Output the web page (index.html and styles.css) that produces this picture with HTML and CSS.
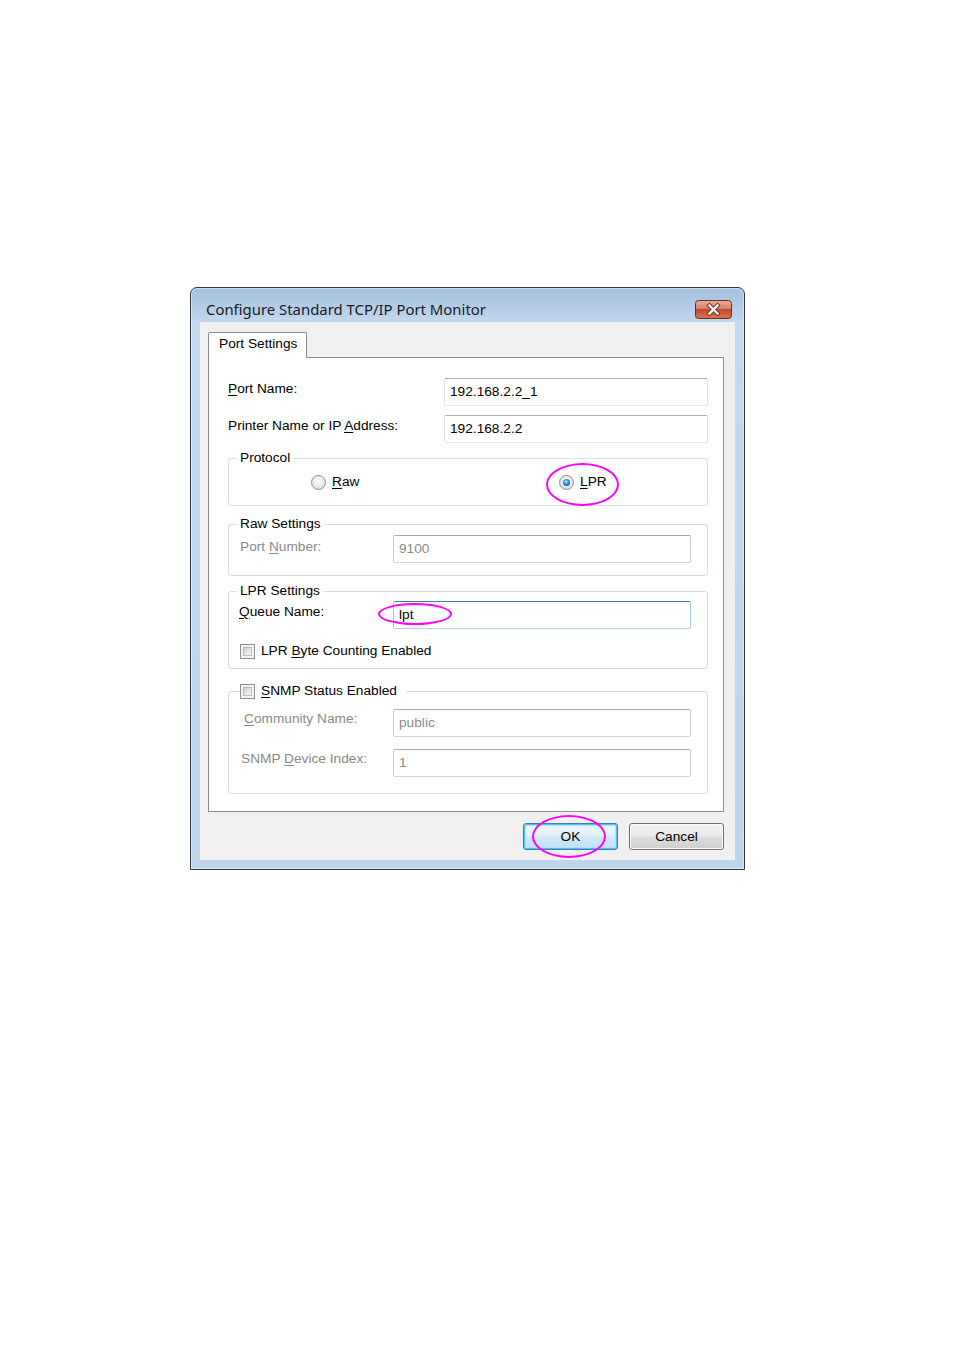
FILE: index.html
```html
<!DOCTYPE html>
<html>
<head>
<meta charset="utf-8">
<link rel="stylesheet" href="styles.css">
</head>
<body>
<div class="window">
  <div class="titlebar">
    <span class="title">Configure Standard TCP/IP Port Monitor</span>
    <span class="close">
      <svg width="37" height="19" viewBox="0 0 37 19">
        <defs>
          <linearGradient id="cr" x1="0" y1="0" x2="0" y2="1">
            <stop offset="0" stop-color="#eab0a2"/>
            <stop offset="0.45" stop-color="#d98068"/>
            <stop offset="0.5" stop-color="#c4492e"/>
            <stop offset="1" stop-color="#d8764e"/>
          </linearGradient>
        </defs>
        <rect x="0.5" y="0.5" width="36" height="18" rx="3" fill="url(#cr)" stroke="#6e2b1f"/>
        <path d="M14.5 5.5 L22.5 13.5 M22.5 5.5 L14.5 13.5" stroke="#6a3a32" stroke-width="4.4" stroke-linecap="square"/>
        <path d="M14.5 5.5 L22.5 13.5 M22.5 5.5 L14.5 13.5" stroke="#f4f4f4" stroke-width="2.4" stroke-linecap="square"/>
      </svg>
    </span>
  </div>
  <div class="client">
    <div class="tab">Port Settings</div>
    <div class="panel">
      <div class="row">
        <label><u>P</u>ort Name:</label>
        <div class="input">192.168.2.2_1</div>
      </div>
      <div class="row">
        <label>Printer Name or IP <u>A</u>ddress:</label>
        <div class="input">192.168.2.2</div>
      </div>

      <fieldset class="group protocol">
        <legend>Protocol</legend>
        <div class="radios">
          <span class="ritem"><span class="radio"></span><span><u>R</u>aw</span></span>
          <span class="ritem lpr"><span class="radio on"></span><span><u>L</u>PR</span><span class="mark mark-lpr"></span></span>
        </div>
      </fieldset>

      <fieldset class="group raw">
        <legend>Raw Settings</legend>
        <div class="frow">
          <label class="dis pn">Port <u>N</u>umber:</label>
          <div class="input disabled">9100</div>
        </div>
      </fieldset>

      <fieldset class="group lprs">
        <legend>LPR Settings</legend>
        <div class="frow">
          <label class="qn"><u>Q</u>ueue Name:</label>
          <div class="input focused">lpt<span class="mark mark-lpt"></span></div>
        </div>
        <div class="check"><span class="cb"></span><span>LPR <u>B</u>yte Counting Enabled</span></div>
      </fieldset>

      <fieldset class="group snmp">
        <legend class="check"><span class="cb"></span><span><u>S</u>NMP Status Enabled</span></legend>
        <div class="frow">
          <label class="dis cn"><u>C</u>ommunity Name:</label>
          <div class="input disabled">public</div>
        </div>
        <div class="frow">
          <label class="dis di">SNMP <u>D</u>evice Index:</label>
          <div class="input disabled">1</div>
        </div>
      </fieldset>
    </div>
    <div class="buttons">
      <button class="btn default">OK<span class="mark mark-ok"></span></button>
      <button class="btn">Cancel</button>
    </div>
  </div>
</div>
</body>
</html>
```

FILE: styles.css
```css
* { box-sizing: border-box; }

body {
  margin: 0;
  background: #ffffff;
  font-family: "Liberation Sans", Arial, sans-serif;
  font-size: 13.7px;
  color: #000;
}

u { text-decoration: underline; text-underline-offset: 2px; }

.window {
  margin: 287px 0 0 190px;
  width: 555px;
  height: 583px;
  border: 1px solid #2f3a46;
  border-radius: 7px 7px 0 0;
  background: linear-gradient(#a4c0de 0, #b4cde8 20px, #c2d8ee 34px, #bdd4eb 100%);
  box-shadow: inset 0 0 0 1px rgba(255, 255, 255, 0.45);
  display: flex;
  flex-direction: column;
}

.titlebar {
  height: 34px;
  flex: none;
  padding: 8px 12px 0 15px;
  display: flex;
  align-items: center;
  justify-content: space-between;
}

.title {
  font-family: "Noto Sans", "Open Sans", sans-serif;
  font-size: 14.9px;
  color: #1b1b1b;
}

.close { display: block; height: 19px; }
.close svg { display: block; }

.client {
  flex: 1;
  margin: 0 9px 9px;
  background: #f0f0f0;
  padding: 10px 11px 0 8px;
}

.tab {
  position: relative;
  z-index: 1;
  width: 99px;
  height: 26px;
  margin-bottom: -1px;
  border: 1px solid #898c95;
  border-bottom: none;
  border-radius: 2px 2px 0 0;
  background: #fff;
  padding: 3px 0 0 10px;
  line-height: 16px;
}

.panel {
  height: 455px;
  border: 1px solid #898c95;
  background: #fff;
  padding: 20px 15px 0 19px;
}

.row {
  display: flex;
  align-items: flex-start;
  height: 28px;
}
.row + .row { margin-top: 9px; }
.row label {
  width: 216px;
  padding-top: 3px;
  line-height: 16px;
  white-space: nowrap;
}

.input {
  position: relative;
  flex: 1;
  height: 28px;
  border: 1px solid;
  border-color: #abadb3 #dbdfe6 #e3e9ef #e2e3ea;
  border-radius: 2px;
  background: #fff;
  padding-left: 5px;
  line-height: 26px;
  white-space: nowrap;
}
.input.disabled {
  color: #8a8a8a;
  border-color: #a9a9a9 #c9cdd2 #d3d7dc #c9cdd2;
}
.input.focused {
  border-color: #3d7bad #a4c9e3 #b5cfe7 #a4c9e3;
}

.group {
  margin: 7px 0 0;
  min-width: 0;
  border: 1px solid #d5dfe5;
  border-radius: 3px;
  padding: 8px 16px 15px 11px;
}
.group legend {
  padding: 0 3px;
  margin-left: -3px;
  line-height: 16px;
}

.radios {
  display: grid;
  grid-template-columns: 248px auto;
  padding-left: 71px;
  line-height: 16px;
}
.ritem {
  position: relative;
  display: flex;
  align-items: center;
  gap: 6px;
}
.radio {
  position: relative;
  flex: none;
  width: 15px;
  height: 15px;
  border-radius: 50%;
  border: 1px solid #8c8e90;
  background: radial-gradient(circle at 50% 40%, #ffffff 0, #ececec 45%, #d2d2d2 100%);
}
.radio.on::after {
  content: "";
  position: absolute;
  left: 3px;
  top: 3px;
  width: 7px;
  height: 7px;
  border-radius: 50%;
  background: radial-gradient(circle at 45% 40%, #b6ecff 0, #3397dc 40%, #0b3f7a 90%);
}

.group.raw { margin-top: 10px; padding-top: 3px; padding-bottom: 12px; }
.group.lprs { margin-top: 7px; padding-top: 2px; padding-bottom: 9px; }
.group.lprs .check { margin-top: 14px; }
.group.snmp { margin-top: 14px; padding-top: 10px; padding-bottom: 16px; }

.frow {
  display: flex;
  align-items: flex-start;
  height: 28px;
}
.frow + .frow { margin-top: 12px; }
.frow label {
  width: 153px;
  padding-top: 3px;
  line-height: 16px;
  white-space: nowrap;
}
.frow label.pn { padding-top: 4px; }
.frow label.qn { margin-left: -1px; width: 154px; }
.frow label.cn { padding-left: 4px; padding-top: 2px; }
.frow label.di { padding-left: 1px; padding-top: 2px; }

.dis { color: #8a8a8a; }

.check {
  display: flex;
  align-items: center;
  gap: 6px;
  line-height: 16px;
}
.group.snmp legend.check {
  margin: 0;
  padding: 0 9px 0 0;
}
.cb {
  position: relative;
  flex: none;
  width: 15px;
  height: 15px;
  border: 1px solid #8e8f8f;
  background: #f4f4f4;
}
.cb::after {
  content: "";
  position: absolute;
  inset: 2px;
  border: 1px solid #b9bcc0;
  background: linear-gradient(135deg, #cbcfd4 0, #e6e8ea 60%, #f6f6f6 100%);
}

.buttons {
  display: flex;
  justify-content: flex-end;
  gap: 11px;
  margin-top: 11px;
}
.btn {
  position: relative;
  width: 95px;
  height: 27px;
  padding: 0;
  border: 1px solid #707070;
  border-radius: 3px;
  background: linear-gradient(#f2f2f2 0, #ebebeb 48%, #dddddd 52%, #cfcfcf 100%);
  box-shadow: inset 0 0 0 1px #fbfbfb;
  font-family: "Liberation Sans", Arial, sans-serif;
  font-size: 13.7px;
  color: #000;
}
.btn.default {
  border-color: #3c7fb1;
  box-shadow: inset 0 0 0 1px #4fc2ef, inset 0 0 0 2px #a9e2f9;
  background: linear-gradient(#eaf6fd 0, #e2f1fb 48%, #d0e9f8 52%, #c4e1f4 100%);
}

.mark {
  position: absolute;
  border: 2px solid #ff00ff;
  border-radius: 50%;
  pointer-events: none;
}
.mark-lpr { left: -13px; top: -11px; width: 73px; height: 43px; }
.mark-lpt { left: -16px; top: 1px; width: 74px; height: 22px; }
.mark-ok { left: 8px; top: -9px; width: 74px; height: 43px; }
```
